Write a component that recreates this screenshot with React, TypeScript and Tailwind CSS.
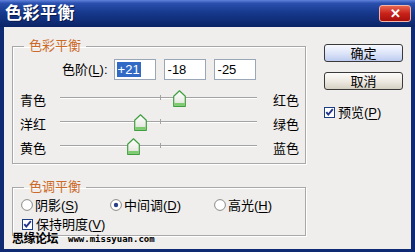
import React from 'react';

const FONT = "font-['Liberation_Sans','Noto_Sans_CJK_SC',sans-serif]";

const SLIDERS = [
  { left: '青色', right: '红色', value: 21 },
  { left: '洋红', right: '绿色', value: -18 },
  { left: '黄色', right: '蓝色', value: -25 },
];

const Thumb = () => (
  <svg width="13" height="17" viewBox="0 0 13 17">
    <defs>
      <linearGradient id="thumbFill" x1="0" y1="0" x2="0" y2="1">
        <stop offset="0" stopColor="#ffffff" />
        <stop offset="0.7" stopColor="#ebebe6" />
        <stop offset="1" stopColor="#d6d6cf" />
      </linearGradient>
    </defs>
    <path d="M6.5 0.8 L12.3 6.2 L12.3 16.3 L0.7 16.3 L0.7 6.2 Z" fill="url(#thumbFill)" stroke="#3f9f3f" strokeWidth="1.2" strokeLinejoin="round" />
    <rect x="1.3" y="13" width="10.4" height="2.8" fill="#7ccb6e" />
  </svg>
);

const Slider = ({ left, right, value }: { left: string; right: string; value: number }) => {
  const pos = 98.5 + (value / 100) * 98.5;
  return (
    <div className="flex items-center h-[24px]">
      <span className="w-[40px] text-[13px] leading-none">{left}</span>
      <div className="relative w-[197px] h-full">
        <div className="absolute left-0 right-0 top-[9px] h-px bg-[#a3a3a3]" />
        <div className="absolute left-0 right-0 top-[10px] h-px bg-white" />
        <div className="absolute left-[100px] top-[7px] h-[5px] w-px bg-[#a3a3a3]" />
        <div className="absolute top-[2px]" style={{ left: pos - 6.5 }}>
          <Thumb />
        </div>
      </div>
      <span className="ml-[16px] text-[13px] leading-none">{right}</span>
    </div>
  );
};

const CheckBox = () => (
  <svg width="11" height="11" viewBox="0 0 11 11">
    <rect x="0.5" y="0.5" width="10" height="10" fill="#ffffff" stroke="#1c3f82" />
    <path d="M2.3 5.2 L4.3 7.6 L8.8 2.2" fill="none" stroke="#22348c" strokeWidth="1.9" />
  </svg>
);

const Radio = ({ checked }: { checked?: boolean }) => (
  <svg width="12" height="12" viewBox="0 0 12 12">
    <circle cx="6" cy="6" r="5.4" fill="#ffffff" stroke="#8a8a8a" />
    {checked && <circle cx="6" cy="6" r="2.2" fill="#2a3f86" />}
  </svg>
);

const Key = ({ k }: { k: string }) => (
  <>(<span className="underline underline-offset-2">{k}</span>)</>
);

export default function App() {
  return (
    <div className={`w-[415px] h-[252px] overflow-hidden flex flex-col bg-[#0d2a73] text-black ${FONT}`}>
      {/* title bar */}
      <div className="h-[27px] flex items-center justify-between pl-[5px] pr-[4px] bg-[linear-gradient(to_bottom,#6183dc_0%,#2a4fae_12%,#173a8e_45%,#0b2466_100%)]">
        <span className="text-white text-[17px] font-bold leading-none tracking-[0.5px] [text-shadow:1px_1px_0_#0a1a4a]">色彩平衡</span>
        <div className="w-[32px] h-[17px] rounded-[3px] border border-[#f4b4a8] bg-[linear-gradient(to_bottom,#e8654f_0%,#c8221a_50%,#a80f0a_100%)] flex items-center justify-center text-white text-[13px] font-bold leading-none">
          ✕
        </div>
      </div>

      {/* body */}
      <div className="relative flex-1 mx-[4px] mb-[3px] bg-[#efeeec] flex">
        <div className="pl-[8px] flex flex-col">
          <fieldset className="mt-[11px] w-[294px] border border-[#a8a8a8] shadow-[inset_1px_1px_0_#ffffff,1px_1px_0_#ffffff] pl-[7px] pb-[3px]">
            <legend className="ml-[4px] px-[5px] text-[13px] leading-[16px] text-[#cc6a2a]">色彩平衡</legend>
            <div className="flex items-center h-[21px] mt-[5px] pl-[42px]">
              <span className="text-[13px] leading-none mr-[6px]">色阶<Key k="L" />:</span>
              <div className="w-[42px] h-[21px] border border-[#9aa7b6] bg-white flex items-center pl-[2px] text-[13px]">
                <span className="bg-[#316ac5] text-white px-px leading-[15px]">+21</span>
              </div>
              <div className="ml-[8px] w-[42px] h-[21px] border border-[#9aa7b6] bg-white flex items-center pl-[3px] text-[13px]">-18</div>
              <div className="ml-[8px] w-[42px] h-[21px] border border-[#9aa7b6] bg-white flex items-center pl-[3px] text-[13px]">-25</div>
            </div>
            <div className="mt-[8px] flex flex-col">
              {SLIDERS.map((s) => (
                <Slider key={s.left} {...s} />
              ))}
            </div>
          </fieldset>

          <fieldset className="mt-[15px] w-[294px] border border-[#a8a8a8] shadow-[inset_1px_1px_0_#ffffff,1px_1px_0_#ffffff] pl-[8px] pb-[3px]">
            <legend className="ml-[3px] px-[5px] text-[13px] leading-[16px] text-[#cc6a2a]">色调平衡</legend>
            <div className="mt-[2px] h-[16px] flex items-center text-[13px] leading-none">
              <div className="w-[89px] flex items-center gap-[2px]"><Radio /><span>阴影<Key k="S" /></span></div>
              <div className="w-[104px] flex items-center gap-[2px]"><Radio checked /><span>中间调<Key k="D" /></span></div>
              <div className="flex items-center gap-[2px]"><Radio /><span>高光<Key k="H" /></span></div>
            </div>
            <div className="mt-[3px] h-[16px] flex items-center gap-[3px] pl-px text-[13px] leading-none">
              <CheckBox />
              <span>保持明度<Key k="V" /></span>
            </div>
          </fieldset>
        </div>

        {/* right column */}
        <div className="ml-[18px] pt-[17px] flex flex-col">
          <button className="w-[79px] h-[18px] rounded-[3px] border border-[#3a3a3a] bg-[linear-gradient(to_bottom,#f8f9ff_0%,#dbe3f8_55%,#bccbef_100%)] text-[13px] leading-none">确定</button>
          <button className="mt-[10px] w-[79px] h-[18px] rounded-[3px] border border-[#3a3a3a] bg-[linear-gradient(to_bottom,#fdfcfa_0%,#ece8e0_55%,#d6d0c2_100%)] text-[13px] leading-none">取消</button>
          <div className="mt-[14px] h-[16px] flex items-center gap-[3px] text-[13px] leading-none">
            <CheckBox />
            <span>预览<Key k="P" /></span>
          </div>
        </div>

        {/* watermark */}
        <div className="absolute left-[8px] top-[206px] flex items-end">
          <span className="text-[12px] font-bold leading-none tracking-[-0.5px]">思缘论坛</span>
          <span className="ml-[10px] mb-[1px] font-['DejaVu_Sans_Mono',monospace] text-[9px] font-bold leading-none">www.missyuan.com</span>
        </div>
      </div>
    </div>
  );
}
